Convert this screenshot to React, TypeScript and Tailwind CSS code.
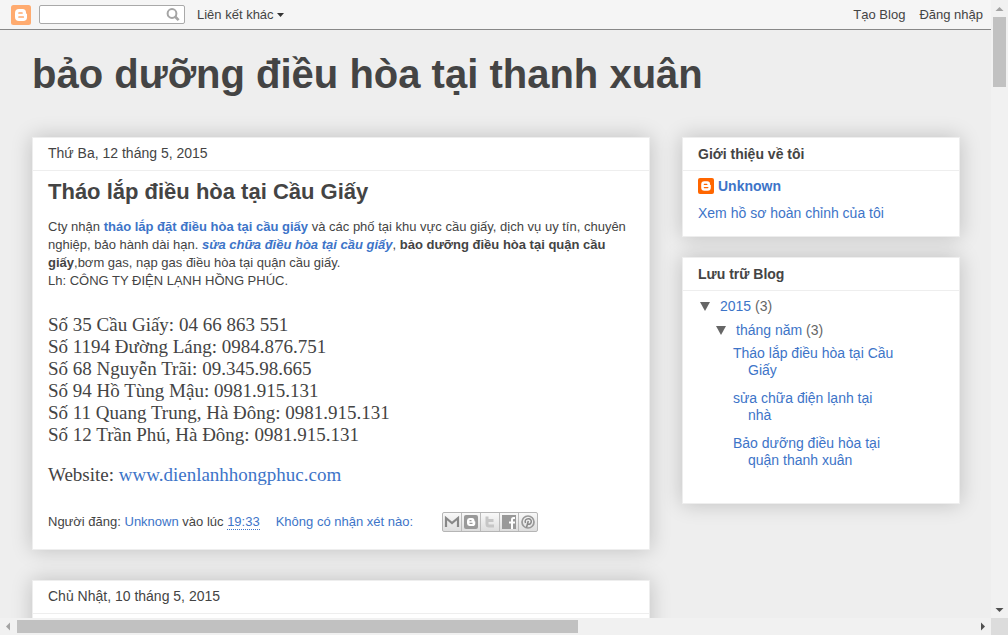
import type { ReactNode } from "react"

const phones = [
    "Số 35 Cầu Giấy: 04 66 863 551",
    "Số 1194 Đường Láng: 0984.876.751",
    "Số 68 Nguyễn Trãi: 09.345.98.665",
    "Số 94 Hồ Tùng Mậu: 0981.915.131",
    "Số 11 Quang Trung, Hà Đông: 0981.915.131",
    "Số 12 Trần Phú, Hà Đông: 0981.915.131",
]

const archive = [
    "Tháo lắp điều hòa tại Cầu Giấy",
    "sửa chữa điện lạnh tại nhà",
    "Bảo dưỡng điều hòa tại quận thanh xuân",
]

export default function App() {
    return (
        <div className="flex h-screen flex-col bg-[#eeeeee] font-['Liberation_Sans',Arial,sans-serif] text-[#444444]">
            <div className="flex min-h-0 flex-1">
                <div className="min-w-0 flex-1 overflow-hidden">
                    <Navbar />
                    <header className="px-8 pt-5 pb-[39px]">
                        <h1 className="text-[40px] leading-12 font-bold">bảo dưỡng điều hòa tại thanh xuân</h1>
                    </header>
                    <div className="flex items-start gap-8 pr-[31px] pl-8">
                        <main className="flex min-w-0 flex-1 flex-col gap-[30px]">
                            <Card title={<h2 className="pb-0.5 text-sm">Thứ Ba, 12 tháng 5, 2015</h2>}>
                                <Post />
                            </Card>
                            <Card title={<h2 className="pb-0.5 text-sm">Chủ Nhật, 10 tháng 5, 2015</h2>}>
                                <div className="h-40"></div>
                            </Card>
                        </main>
                        <Sidebar />
                    </div>
                </div>
                <VerticalScrollbar />
            </div>
            <HorizontalScrollbar />
        </div>
    )
}

const Navbar = () => {
    return (
        <nav className="flex h-[30px] items-center border-b border-[#888888] bg-[#f5f5f5] pr-2 pl-[11px] text-[13px] text-[#444444]">
            <a href="#" aria-label="Blogger">
                <BloggerIcon className="size-5" bg="#ffab6f" />
            </a>
            <form className="ml-2 flex h-[19px] w-[146px] items-center rounded-xs border border-[#a9a9a9] bg-white">
                <input type="text" aria-label="Search" className="h-full min-w-0 flex-1 px-1 outline-none" />
                <button type="button" aria-label="Search" className="mr-1">
                    <svg viewBox="0 0 14 14" className="size-[14px]" fill="none" stroke="#a5a5a5">
                        <circle cx="6" cy="5.5" r="4.4" strokeWidth="2" />
                        <path d="M9 8.5 L12.6 12.2" strokeWidth="2.6" />
                    </svg>
                </button>
            </form>
            <button type="button" className="ml-3 flex items-center gap-[3px]">
                Liên kết khác
                <svg viewBox="0 0 7 4" className="h-1 w-[7px]" fill="#333333">
                    <path d="M0 0h7L3.5 4z" />
                </svg>
            </button>
            <div className="ml-auto flex gap-[14px]">
                <a href="#">Tạo Blog</a>
                <a href="#">Đăng nhập</a>
            </div>
        </nav>
    )
}

const Card = ({ title, children }: { title: ReactNode; children: ReactNode }) => {
    return (
        <section className="border border-[#eeeeee] bg-white shadow-[0_0_20px_rgba(0,0,0,0.2)]">
            <div className="flex h-[33px] items-center border-b border-[#eeeeee] px-[15px]">{title}</div>
            {children}
        </section>
    )
}

const Post = () => {
    return (
        <article className="px-[15px] pt-2 pb-[17px]">
            <h3 className="text-[22px] leading-[26px] font-bold">Tháo lắp điều hòa tại Cầu Giấy</h3>
            <div className="mt-[13px] text-[13px] leading-[18px]">
                <p>
                    Cty nhận <Link bold>tháo lắp đặt điều hòa tại cầu giấy</Link> và các phố tại khu vực cầu giấy,
                    dịch vụ uy tín, chuyên nghiệp, bảo hành dài hạn.{" "}
                    <i><Link bold>sửa chữa điều hòa tại cầu giấy</Link></i>,{" "}
                    <b>bảo dưỡng điều hòa tại quận cầu giấy</b>,bơm gas, nạp gas điều hòa tại quận cầu giấy.
                </p>
                <p>Lh: CÔNG TY ĐIỆN LẠNH HỒNG PHÚC.</p>
            </div>
            <div className="mt-6 font-['Liberation_Serif','Times_New_Roman',serif] text-[19px] leading-[22px]">
                {phones.map((phone) => (
                    <p key={phone}>{phone}</p>
                ))}
                <p className="mt-[18px]">
                    Website: <Link>www.dienlanhhongphuc.com</Link>
                </p>
            </div>
            <footer className="mt-[26px] flex h-5 items-center text-[13px]">
                <span>
                    Người đăng: <Link>Unknown</Link> vào lúc{" "}
                    <a href="#" className="border-b border-dotted border-[#3d74c8] text-[#3d74c8]">19:33</a>
                </span>
                <span className="ml-4"><Link>Không có nhận xét nào:</Link></span>
                <ShareButtons />
            </footer>
        </article>
    )
}

const Link = ({ bold, children }: { bold?: boolean; children: ReactNode }) => {
    return (
        <a href="#" className={bold ? "font-bold text-[#3d74c8]" : "text-[#3d74c8]"}>
            {children}
        </a>
    )
}

const Sidebar = () => {
    return (
        <aside className="flex w-[278px] shrink-0 flex-col gap-5 text-sm">
            <Card title={<h2 className="font-bold">Giới thiệu về tôi</h2>}>
                <div className="px-[15px] pt-[5px] pb-[13px]">
                    <div className="flex items-center gap-1">
                        <BloggerIcon className="size-4" bg="#ff6600" />
                        <Link bold>Unknown</Link>
                    </div>
                    <p className="mt-[7px]"><Link>Xem hồ sơ hoàn chỉnh của tôi</Link></p>
                </div>
            </Card>
            <Card title={<h2 className="font-bold">Lưu trữ Blog</h2>}>
                <div className="px-[15px] pt-[3px] pb-[34px] text-[#666666]">
                    <div className="flex h-6 items-center gap-[10px] pl-[2px]">
                        <Toggle label="2015" />
                        <span><Link>2015</Link> (3)</span>
                    </div>
                    <div className="flex h-6 items-center gap-[10px] pl-[18px]">
                        <Toggle label="tháng năm" />
                        <span><Link>tháng năm</Link> (3)</span>
                    </div>
                    <ul className="mt-[3px] flex flex-col gap-[11px] pl-[50px] leading-[17px]">
                        {archive.map((post) => (
                            <li key={post} className="max-w-[150px] -indent-[15px]"><Link>{post}</Link></li>
                        ))}
                    </ul>
                </div>
            </Card>
        </aside>
    )
}

const Toggle = ({ label }: { label: string }) => {
    return (
        <button type="button" aria-label={label}>
            <svg viewBox="0 0 10 9" className="h-[9px] w-[10px]" fill="#666666">
                <path d="M0 0h10L5 9z" />
            </svg>
        </button>
    )
}

const BloggerIcon = ({ className, bg }: { className: string; bg: string }) => {
    return (
        <svg viewBox="0 0 20 20" className={className}>
            <rect width="20" height="20" rx="2.5" fill={bg} />
            <path
                d="M8 4h3.5a3.5 3.5 0 0 1 3.5 3.5c0 1 .3 1.3 1 1.4v3.3A3.8 3.8 0 0 1 12.2 16H8a4 4 0 0 1-4-4V8a4 4 0 0 1 4-4z"
                fill="#ffffff"
            />
            <path d="M8 8h3M8 12h4.3" stroke={bg} strokeWidth="1.7" strokeLinecap="round" />
        </svg>
    )
}

const ShareButtons = () => {
    return (
        <div className="ml-[29px] flex h-5 divide-x divide-[#bbbbbb] rounded-xs border border-[#b5b5b5] bg-linear-to-b from-[#f9f9f9] to-[#dedede]">
            <ShareButton label="Gmail">
                <path d="M3 14V5l6 5 6-5v9" fill="none" stroke="#888888" strokeWidth="2.2" />
            </ShareButton>
            <ShareButton label="Blogger">
                <rect x="2" y="2" width="14" height="14" rx="2" fill="#999999" />
                <path
                    d="M7.5 5h2.8a2.3 2.3 0 0 1 2.2 2.4c0 .8.2 1 .8 1v1.8a2.7 2.7 0 0 1-2.7 2.8H7.5A2.7 2.7 0 0 1 5 10.3V7.7A2.7 2.7 0 0 1 7.5 5z"
                    fill="#ffffff"
                />
                <path d="M7.5 7.6h2M7.5 10.4h3" stroke="#999999" strokeWidth="1.2" />
            </ShareButton>
            <ShareButton label="Twitter">
                <path d="M6 3.500v7.500a2 2 0 0 0 2 2h5M6 7.5h6.5" fill="none" stroke="#c6c6c6" strokeWidth="3" />
            </ShareButton>
            <ShareButton label="Facebook">
                <path d="M2 2h14v14H2z" fill="#999999" />
                <path d="M15 5h-1.5q-1.5 0-1.500 1.7V16M9 9.5h6" fill="none" stroke="#ffffff" strokeWidth="2" />
            </ShareButton>
            <ShareButton label="Pinterest">
                <circle cx="9" cy="9" r="6" fill="none" stroke="#999999" strokeWidth="1.7" />
                <path
                    d="M6.5 10C5.4 7.5 7 5.700 9.3 5.7s3.5 1.8 2.8 3.9c-.6 1.9-2.7 2.2-3.4 1M9.3 8l-1.8 6.5"
                    fill="none"
                    stroke="#888888"
                    strokeWidth="1.5"
                />
            </ShareButton>
        </div>
    )
}

const ShareButton = ({ label, children }: { label: string; children: ReactNode }) => {
    return (
        <a href="#" aria-label={label} className="flex w-[19px] items-center justify-center last:w-[18px]">
            <svg viewBox="0 0 18 18" className="size-[18px]">{children}</svg>
        </a>
    )
}

const VerticalScrollbar = () => {
    return (
        <div className="flex w-[17px] shrink-0 flex-col items-center bg-[#f1f1f1]">
            <svg viewBox="0 0 17 17" className="size-[17px]" fill="#a3a3a3">
                <path d="M8.5 7l4 4h-8z" />
            </svg>
            <div className="h-[70px] w-[13px] bg-[#c1c1c1]"></div>
            <svg viewBox="0 0 17 17" className="mt-auto size-[17px]" fill="#505050">
                <path d="M8.5 11l4-4h-8z" />
            </svg>
        </div>
    )
}

const HorizontalScrollbar = () => {
    return (
        <div className="flex h-[17px] shrink-0 bg-[#f1f1f1]">
            <div className="flex flex-1 items-center">
                <svg viewBox="0 0 17 17" className="size-[17px]" fill="#a3a3a3">
                    <path d="M6 8.5l4-4v8z" />
                </svg>
                <div className="flex-1">
                    <div className="h-[13px] w-[58.6%] bg-[#c1c1c1]"></div>
                </div>
                <svg viewBox="0 0 17 17" className="size-[17px]" fill="#505050">
                    <path d="M11 8.5l-4-4v8z" />
                </svg>
            </div>
            <div className="w-[17px] bg-[#dcdcdc]"></div>
        </div>
    )
}
